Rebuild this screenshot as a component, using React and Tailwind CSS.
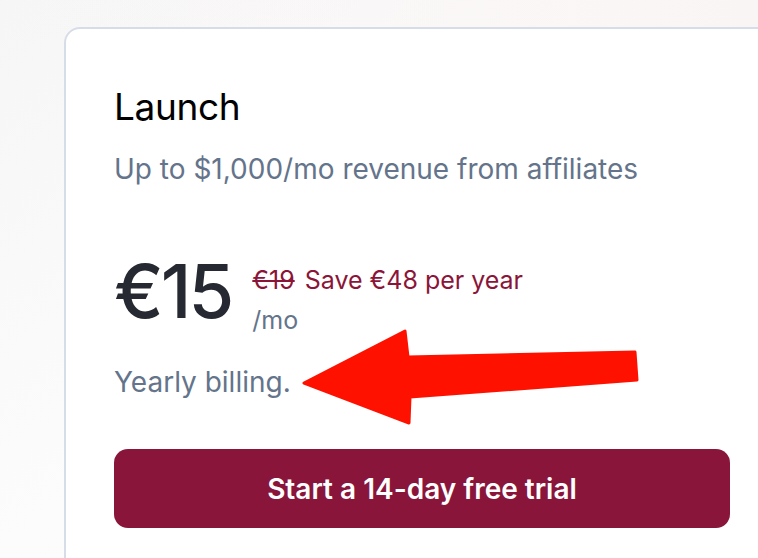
import React from 'react';

const Arrow = () => (
  <svg
    className="absolute left-0 top-0 pointer-events-none"
    width="758"
    height="558"
    viewBox="0 0 758 558"
  >
    <polygon
      points="304,383 405,331 408,357 635,352 637,380 410,397 409,423"
      fill="#ff1100"
      stroke="#ff1100"
      strokeWidth="3"
      strokeLinejoin="round"
    />
  </svg>
);

export default function App() {
  return (
    <div
      className="relative w-[758px] h-[558px] overflow-hidden bg-gradient-to-br from-[#f6f6f7] via-[#fdfcfc] to-[#f9f4f4]"
      style={{ fontFamily: 'Inter, "Noto Sans", sans-serif' }}
    >
      <div className="absolute inset-x-0 top-0 h-[40px] bg-gradient-to-r from-transparent to-[#faf5f5]" />

      <div className="relative ml-[64px] mt-[27px] w-[716px] h-[600px] rounded-2xl border-2 border-[#d7dde8] bg-white px-[48px] pt-[54px]">
        <h2 className="text-[37px] leading-[48px] font-normal text-black tracking-[-0.01em]">Launch</h2>
        <p className="mt-[20px] text-[28px] leading-[36px] text-[#64748b]">
          Up to $1,000/mo revenue from affiliates
        </p>

        <div className="mt-[64px] flex items-start gap-[21px]">
          <span className="text-[74px] leading-[80px] font-medium text-[#262931] tracking-[-0.04em]">€15</span>
          <div className="pt-[9px] flex flex-col">
            <div className="flex items-baseline gap-[10px] text-[25px] leading-[40px] text-[#8a1538]">
              <span className="line-through decoration-2">€19</span>
              <span>Save €48 per year</span>
            </div>
            <span className="text-[25px] leading-[40px] text-[#64748b]">/mo</span>
          </div>
        </div>

        <p className="mt-[24px] text-[28px] leading-[36px] text-[#64748b]">Yearly billing.</p>

        <button className="mt-[49px] w-full h-[79px] rounded-[14px] bg-[#89153a] text-white text-[28px] font-semibold">
          Start a 14-day free trial
        </button>
      </div>

      <Arrow />
    </div>
  );
}
